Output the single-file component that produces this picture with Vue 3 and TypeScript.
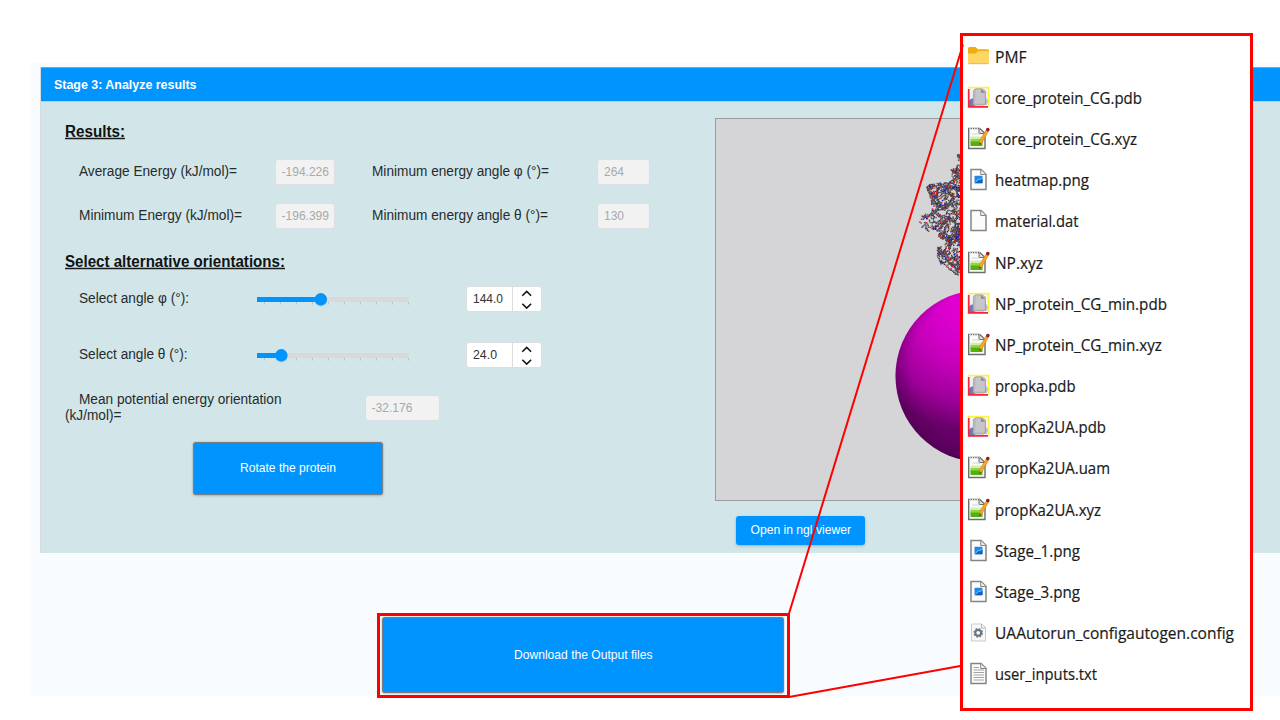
<script setup lang="ts">
type IconKind = 'folder' | 'pdb' | 'edit' | 'image' | 'blank' | 'gear' | 'text'

interface OutputFile {
  name: string
  icon: IconKind
  width: number
}

interface Atom {
  x: number
  y: number
  fill: string
}

const files: OutputFile[] = [
  { name: 'PMF', icon: 'folder', width: 31.5 },
  { name: 'core_protein_CG.pdb', icon: 'pdb', width: 147 },
  { name: 'core_protein_CG.xyz', icon: 'edit', width: 142 },
  { name: 'heatmap.png', icon: 'image', width: 94 },
  { name: 'material.dat', icon: 'blank', width: 83.5 },
  { name: 'NP.xyz', icon: 'edit', width: 48 },
  { name: 'NP_protein_CG_min.pdb', icon: 'pdb', width: 172 },
  { name: 'NP_protein_CG_min.xyz', icon: 'edit', width: 167 },
  { name: 'propka.pdb', icon: 'pdb', width: 80.5 },
  { name: 'propKa2UA.pdb', icon: 'pdb', width: 111 },
  { name: 'propKa2UA.uam', icon: 'edit', width: 115 },
  { name: 'propKa2UA.xyz', icon: 'edit', width: 106 },
  { name: 'Stage_1.png', icon: 'image', width: 85 },
  { name: 'Stage_3.png', icon: 'image', width: 85 },
  { name: 'UAAutorun_configautogen.config', icon: 'gear', width: 239 },
  { name: 'user_inputs.txt', icon: 'text', width: 102 },
]

const results = [
  { label: 'Average Energy (kJ/mol)=', value: '-194.226', angle: 'Minimum energy angle φ (°)=', degrees: '264', len: 158, angleLen: 177 },
  { label: 'Minimum Energy (kJ/mol)=', value: '-196.399', angle: 'Minimum energy angle θ (°)=', degrees: '130', len: 163, angleLen: 176 },
]

const sliders = [
  { label: 'Select angle φ (°):', value: '144.0', fill: 63, len: 110, valueLen: 30 },
  { label: 'Select angle θ (°):', value: '24.0', fill: 23.5, len: 108.5, valueLen: 24 },
]

const ticks = Array.from({ length: 10 }, (_, i) => 7.5 + i * 16)

// Left outline of the protein as [y, x] pairs in viewer coordinates.
const outline: [number, number][] = [
  [35, 241], [42, 243], [49, 242], [52, 236], [60, 237], [64, 230], [67, 212], [72, 211],
  [80, 215], [88, 217], [94, 216], [98, 206], [104, 204], [108, 206], [114, 212],
  [119, 225], [125, 228], [130, 221], [138, 222], [145, 225], [150, 230], [155, 235], [157, 240],
]

function edgeAt(y: number): number {
  for (let i = 1; i < outline.length; i++) {
    const [y0, x0] = outline[i - 1]
    const [y1, x1] = outline[i]
    if (y >= y0 && y <= y1) return x0 + ((x1 - x0) * (y - y0)) / (y1 - y0)
  }
  return 999
}

let seed = 4711
function rnd(): number {
  seed = (seed * 1664525 + 1013904223) % 4294967296
  return seed / 4294967296
}

function buildAtoms(): Atom[] {
  const list: Atom[] = []
  for (let c = 0; c < 600; c++) {
    let x = 203 + rnd() * 48
    let y = 36 + rnd() * 121
    let dir = rnd() * 6.28
    if (x < edgeAt(y)) continue
    for (let s = 0; s < 5; s++) {
      const nx = x + Math.cos(dir) * 1.6
      const ny = y + Math.sin(dir) * 1.6
      dir += (rnd() - 0.5) * 2.6
      if (nx < edgeAt(ny) || nx > 250) {
        dir += 2
        continue
      }
      x = nx
      y = ny
      const k = rnd()
      const fill = k < 0.12 ? '#c8141c' : k < 0.24 ? '#1414c4' : k < 0.247 ? '#c0b820' : k < 0.7 ? '#404040' : '#5c5c5c'
      list.push({ x, y, fill })
    }
  }
  return list
}

const atoms = buildAtoms()
</script>

<template>
  <div class="page">
    <main class="canvas">
      <section class="panel">
        <header class="panel-head">
          <svg class="txt" width="200" height="20"><text x="0" y="14" class="b" textLength="142.5" lengthAdjust="spacingAndGlyphs">Stage 3: Analyze results</text></svg>
        </header>
        <div class="panel-body">
          <div class="controls">
            <h2><svg class="txt" width="250" height="24"><text x="0" y="17.5" class="h" textLength="60" lengthAdjust="spacingAndGlyphs">Results:</text><path d="M0 19.5H60" /></svg></h2>
            <div v-for="r in results" :key="r.label" class="result-row">
              <svg class="txt c1" height="20"><text x="0" y="14" :textLength="r.len" lengthAdjust="spacingAndGlyphs">{{ r.label }}</text></svg>
              <span class="field w60"><svg class="txt" width="50" height="18"><text x="0.5" y="13" class="v" textLength="47.5" lengthAdjust="spacingAndGlyphs">{{ r.value }}</text></svg></span>
              <svg class="txt c2" height="20"><text x="0" y="14" :textLength="r.angleLen" lengthAdjust="spacingAndGlyphs">{{ r.angle }}</text></svg>
              <span class="field w52"><svg class="txt" width="40" height="18"><text x="1" y="13" class="v" textLength="20" lengthAdjust="spacingAndGlyphs">{{ r.degrees }}</text></svg></span>
            </div>
            <h2 class="second"><svg class="txt" width="250" height="24"><text x="0" y="17.5" class="h" textLength="220" lengthAdjust="spacingAndGlyphs">Select alternative orientations:</text><path d="M0 19.5H220" /></svg></h2>
            <div v-for="s in sliders" :key="s.label" class="slider-row">
              <svg class="txt c3" height="20"><text x="0" y="14" :textLength="s.len" lengthAdjust="spacingAndGlyphs">{{ s.label }}</text></svg>
              <svg class="slider" width="160" height="22">
                <rect x="0" y="9" width="152" height="5" fill="#d9d9d9" />
                <path v-for="t in ticks" :key="t" :d="`M${t} 14v2.5`" stroke="#b8c6c8" />
                <rect x="0" y="9" :width="s.fill" height="5" fill="#0094ff" />
                <circle :cx="s.fill + 0.8" cy="12.3" r="6.4" fill="#88b8d0" opacity=".4" />
                <circle :cx="s.fill + 0.8" cy="11.3" r="6.2" fill="#0094ff" />
              </svg>
              <div class="spinner">
                <span class="spin-value"><svg class="txt" width="36" height="18"><text x="0" y="13" class="v dark" :textLength="s.valueLen" lengthAdjust="spacingAndGlyphs">{{ s.value }}</text></svg></span>
                <svg width="28" height="25" fill="none" stroke="#151515" stroke-width="1.6"><path d="M9.3 8.7 13.7 4.4l4.4 4.3M9.3 16.8l4.4 4.3 4.4-4.3" /></svg>
              </div>
            </div>
            <div class="mean-row">
              <svg class="txt" width="300" height="36">
                <text x="14" y="14" textLength="202.5" lengthAdjust="spacingAndGlyphs">Mean potential energy orientation</text>
                <text x="0" y="30" textLength="56.5" lengthAdjust="spacingAndGlyphs">(kJ/mol)=</text>
              </svg>
              <span class="field w75"><svg class="txt" width="50" height="18"><text x="0.5" y="13" class="v" textLength="41" lengthAdjust="spacingAndGlyphs">-32.176</text></svg></span>
            </div>
            <button class="rotate"><svg class="txt" width="96" height="18"><text x="0" y="13" class="w" textLength="96" lengthAdjust="spacingAndGlyphs">Rotate the protein</text></svg></button>
          </div>
          <div class="view">
            <svg class="viewer" width="400" height="383">
              <defs>
                <radialGradient id="ball" gradientUnits="userSpaceOnUse" cx="268" cy="178" r="165">
                  <stop offset="0" stop-color="#e400d6" />
                  <stop offset=".22" stop-color="#de00d1" />
                  <stop offset=".45" stop-color="#c600bb" />
                  <stop offset=".65" stop-color="#a0009b" />
                  <stop offset=".83" stop-color="#680069" />
                  <stop offset="1" stop-color="#600064" />
                </radialGradient>
                <radialGradient id="rim" gradientUnits="userSpaceOnUse" cx="274" cy="250" r="97">
                  <stop offset=".8" stop-color="#400044" stop-opacity="0" />
                  <stop offset="1" stop-color="#400044" stop-opacity=".4" />
                </radialGradient>
              </defs>
              <rect x=".5" y=".5" width="420" height="382" fill="#d5d5d7" stroke="#989ea0" />
              <rect v-for="(a, i) in atoms" :key="i" :x="a.x - 0.7" :y="a.y - 0.7" width="1.4" height="1.4" :fill="a.fill" />
              <circle cx="266.5" cy="258" r="86" fill="url(#ball)" />
              <circle cx="266.5" cy="258" r="86" fill="url(#rim)" />
            </svg>
            <button class="ngl"><svg class="txt" width="101" height="18"><text x="0.5" y="12" class="w" textLength="100.5" lengthAdjust="spacingAndGlyphs">Open in ngl viewer</text></svg></button>
          </div>
        </div>
      </section>
      <div class="download-frame">
        <button class="download"><svg class="txt" width="139" height="18"><text x="0" y="13" class="w" textLength="138.5" lengthAdjust="spacingAndGlyphs">Download the Output files</text></svg></button>
      </div>
    </main>

    <aside class="files">
      <div v-for="f in files" :key="f.name" class="file">
        <svg class="icon" width="24" height="24" viewBox="0 0 24 24">
          <g v-if="f.icon === 'folder'">
            <path d="M1 3.7q0-1.7 1.7-1.7h5.8l2.5 2.3h9.5q1.5 0 1.5 1.500V11H1z" fill="#efae0c" />
            <path d="M1 8.5h7.5l2.5-2.5h9.5q1.5 0 1.5 1.5v10q0 1.5-1.5 1.5h-18Q1 19 1 17.5z" fill="#ffd564" />
            <path d="M1.5 18.7h20" stroke="#eabb4a" />
          </g>
          <g v-else-if="f.icon === 'pdb'">
            <rect x="1.5" y="2" width="20" height="18.5" fill="#f2f0f8" />
            <path d="M2 20v-5q2-3.5 5-2l1 7z" fill="#7476b4" />
            <path d="M18 12q3 0 3 4l-1.5 3H17z" fill="#bdbddc" />
            <path d="M6.5 4.5 8 3l2-.8h4.5l4 3v12.5l-2 1.3H6z" fill="#b9b9bd" stroke="#96969c" stroke-width=".7" />
            <path d="M9 4h5l3.5 3.2V17.5H8z" fill="#c6c6c8" />
            <path d="M14 3v3.7h4z" fill="#87878c" />
            <path d="M1 1.5h20.700v19" fill="none" stroke="#fff23c" stroke-width="1.6" />
            <path d="M1.7 3v17.8H21" fill="none" stroke="#f52634" stroke-width="1.7" />
          </g>
          <g v-else-if="f.icon === 'edit'">
            <path d="M1.7 1.5h11l5.3 5v15H1.7z" fill="#fbfbf9" stroke="#6d6d6d" stroke-width="1.4" />
            <path d="M2.5 2h10" stroke="#f5f5f5" stroke-width="2" stroke-dasharray="1 1.4" />
            <path d="M12 2v4.5h5" fill="#ddd" stroke="#6d6d6d" />
            <path d="M5 7h8" stroke="#cbd5e1" />
            <path d="M3.5 9.5h12v5h-12z" fill="#d3efae" />
            <path d="M3.5 12h12v4h-12z" fill="#93d24d" />
            <path d="M3.5 14.5h12V19h-12z" fill="#4fb30a" />
            <path d="m12 18 .8-4.5L19.100 3l2.400 1.300-6.300 11z" fill="#f8a822" stroke="#c77a16" stroke-width=".6" />
            <path d="m12 18 .5-2.5 1.7 1z" fill="#4d4032" />
            <circle cx="20.8" cy="2.6" r="1.8" fill="#8e1b25" />
          </g>
          <g v-else-if="f.icon === 'gear'">
            <path d="M4.5 3H15l3.5 3.5V20h-14z" fill="#f8f8f8" stroke="#cbcbcb" />
            <path d="M14.5 3v4h4" fill="none" stroke="#b4b4b4" />
            <circle cx="11.2" cy="11.8" r="4.1" fill="none" stroke="#72808a" stroke-width="1.5" stroke-dasharray="1.7 1.52" />
            <circle cx="11.2" cy="11.8" r="2.9" fill="none" stroke="#66757f" stroke-width="2" />
          </g>
          <g v-else>
            <path d="M4 1.500h10l5 4.800v15.200H4z" fill="#fbfbfb" stroke="#858585" stroke-width="1.5" />
            <path d="M13.7 1.8v4.7h5" fill="#eee" stroke="#858585" />
            <g v-if="f.icon === 'image'">
              <rect x="7.5" y="7.7" width="8" height="7.8" rx=".8" fill="#2388e4" />
              <path d="m8 15 4.500-3.600 1.500.6 1.500-1.500V15z" fill="#1261bd" />
              <path d="m8.500 14 3.500-3 1.200.6L15 9.500" stroke="#64cff8" fill="none" />
            </g>
            <path v-if="f.icon === 'text'" d="M6.500 5.500H12M6.500 8H17M6.500 10.500H17M6.500 13H17M6.500 15.500H17M6.500 18H17" stroke="#a3a3a3" />
          </g>
        </svg>
        <svg class="name" width="250" height="28"><text x="0" y="20" :textLength="f.width" lengthAdjust="spacingAndGlyphs">{{ f.name }}</text></svg>
      </div>
    </aside>

    <svg class="connectors" width="1280" height="720" stroke="#f00" stroke-width="2">
      <path d="M963 44.5 789 613.5M789 697 963 665.5" />
    </svg>
  </div>
</template>

<style scoped>
.page {
  position: relative;
  box-sizing: border-box;
  width: 1280px;
  height: 720px;
  padding: 63px 0 0 30px;
  overflow: hidden;
  background: #fff;
  font-family: "Liberation Sans", Arial, sans-serif;
}
.canvas {
  box-sizing: border-box;
  height: 633px;
  padding: 4px 0 0 10px;
  background: #f8fcff;
}
.txt { display: block; flex: none; overflow: visible; }
.txt text { font-size: 14px; fill: #262b2c; }
.txt .b { font-size: 13px; font-weight: 700; fill: #fff; }
.txt .h { font-size: 16px; font-weight: 700; fill: #101314; }
.txt path { stroke: #181b1c; stroke-width: 1.3; }
.txt .v { font-size: 13px; fill: #a9a9a9; }
.txt .dark { fill: #333; }
.txt .w { font-size: 13px; fill: #fff; }
.panel {
  box-sizing: border-box;
  height: 486px;
  border-left: 1px solid #d5dcde;
  background: #d2e6e9;
}
.panel-head {
  box-sizing: border-box;
  height: 35px;
  padding: 7px 0 0 13px;
  border-top: 1px solid #7ba9c8;
  border-bottom: 1px solid #a9d4ee;
  background: #0094ff;
}
.panel-body { display: flex; height: 451px; }
.controls { box-sizing: border-box; width: 674px; padding: 17px 0 0 24px; }
h2 { height: 31px; margin: 0; }
h2.second { height: 22px; margin-top: 11px; }
.result-row { display: flex; height: 44px; padding-left: 14px; align-items: center; }
.c1 { width: 196px; }
.c2 { width: 225px; margin-left: 37px; }
.field {
  display: flex;
  box-sizing: border-box;
  height: 26px;
  align-items: center;
  padding-left: 5px;
  border: 1px solid #dcdedf;
  border-radius: 3px;
  background: #f2f2f2;
}
.w60 { width: 60px; }
.w52 { width: 53px; }
.w75 { width: 75px; }
.slider-row { display: flex; height: 56px; padding-left: 14px; align-items: center; }
.slider-row .c3 { width: 178px; }
.slider { flex: none; }
.spinner {
  display: flex;
  box-sizing: border-box;
  width: 76px;
  height: 26px;
  margin-left: 49px;
  border: 1px solid #dcdfe0;
  border-radius: 3px;
  background: #fff;
}
.spin-value {
  display: flex;
  box-sizing: border-box;
  width: 46px;
  padding-left: 6px;
  align-items: center;
  border-right: 1px solid #ddd;
}
.mean-row { display: flex; height: 51.5px; margin-top: 7px; }
.mean-row .field { margin-top: 5px; }
button {
  display: flex;
  box-sizing: border-box;
  align-items: center;
  justify-content: center;
  padding: 0;
  border: 0;
  background: #0094ff;
}
.rotate {
  width: 190px;
  height: 53px;
  margin-left: 128px;
  border: 1px solid #7a7f84;
  border-radius: 3px;
  box-shadow: inset 0 0 1px #7a7f84, 0 0 1px #7a7f84, 0 1px 3px rgba(0, 0, 0, .2);
}
.view { padding-top: 16px; }
.viewer { display: block; }
.ngl {
  width: 129px;
  height: 29px;
  margin: 15px 0 0 21px;
  border-radius: 3px;
  box-shadow: 0 1px 3px rgba(0, 0, 0, .25);
}
.download-frame {
  display: flex;
  box-sizing: border-box;
  width: 413px;
  height: 85px;
  margin: 60px 0 0 337px;
  padding: 1px 2px;
  border: 3px solid #f00;
  background: #f8fcff;
}
.download {
  width: 402px;
  height: 76px;
  border: 1px solid #7a7f84;
  border-radius: 3px;
  box-shadow: inset 0 0 1px #7a7f84, 0 0 1px #7a7f84, 0 1px 2px rgba(0, 0, 0, .2);
}
.files {
  position: absolute;
  box-sizing: border-box;
  left: 960px;
  top: 33px;
  width: 293px;
  height: 678px;
  border: 3px solid #f00;
  background: #fff;
}
.file { display: flex; height: 41.2px; align-items: center; padding-left: 4px; }
.icon { flex: none; }
.name { flex: none; margin-left: 4px; overflow: visible; }
.name text {
  font: 16.5px "Open Sans", "Noto Sans", sans-serif;
  fill: #1a1a1a;
  stroke: #1a1a1a;
  stroke-width: .2;
}
.connectors { position: absolute; left: 0; top: 0; }
</style>
